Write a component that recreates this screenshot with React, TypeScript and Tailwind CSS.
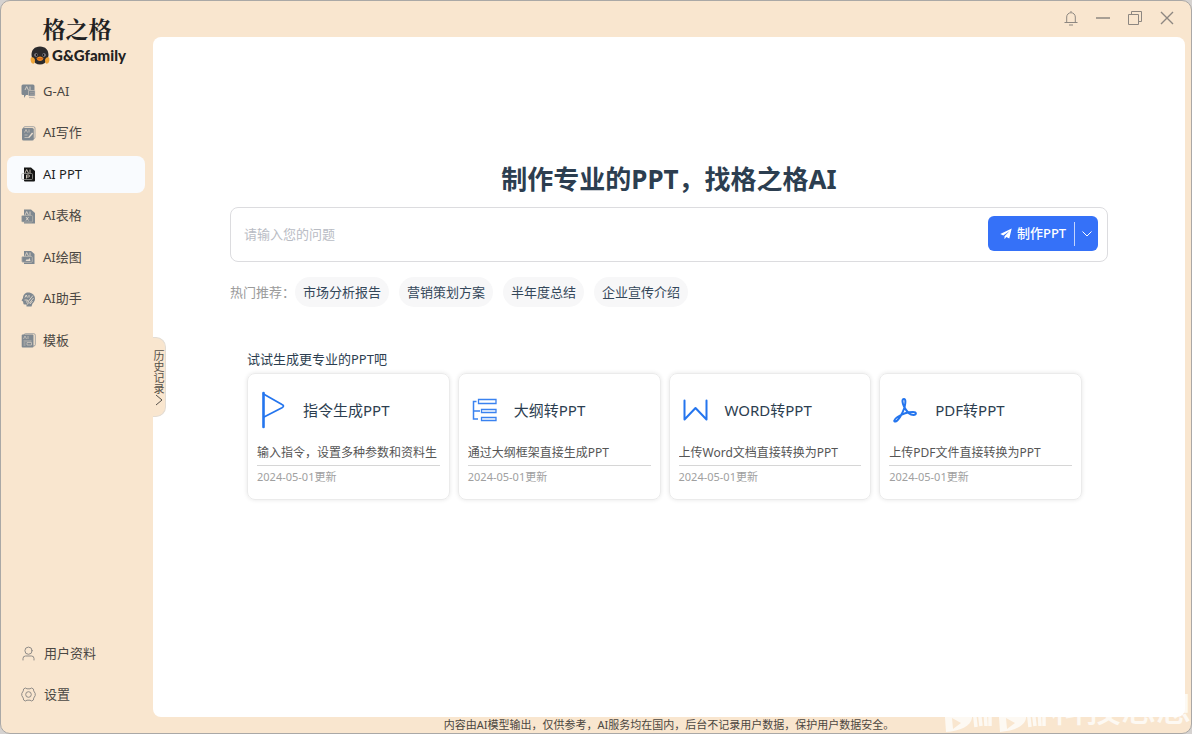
import React, { useState } from "react";

const Penguin = () => (
  <svg viewBox="0 0 40 38" className="w-5 h-[19px]" aria-hidden="true">
    <path
      d="M20 1C9 1 3 8 3 18c0 4 2 6 3 9 2 7 7 10 14 10s12-3 14-10c1-3 3-5 3-9C37 8 31 1 20 1z"
      fill="#2b2a2c"
    />
    <path d="M2 23c4-2 8 1 8 6s-2 7-5 6-5-8-3-12z" fill="#f0a63a" />
    <path d="M38 23c-4-2-8 1-8 6s2 7 5 6 5-8 3-12z" fill="#f0a63a" />
    <circle cx="12" cy="18" r="3.6" fill="#8c8b93" />
    <circle cx="28" cy="18" r="3.6" fill="#8c8b93" />
    <circle cx="13" cy="18" r="1.8" fill="#111" />
    <circle cx="27" cy="18" r="1.8" fill="#111" />
    <path d="M13 24c3-1 4-3 7-3s4 2 7 3c-1 4-3 6-7 6s-6-2-7-6z" fill="#f08a24" />
    <path d="M15 25c3 1 7 1 10 0" stroke="#a33c15" strokeWidth="1.2" fill="none" />
  </svg>
);

const AiMark = () => (
  <path
    d="M4 6 5.7 2.5 7.4 6M9 2.5V6"
    stroke="#e9ddcf"
    strokeWidth="0.8"
    fill="none"
  />
);

const icons: Record<string, React.ReactNode> = {
  chat: (
    <>
      <path d="M2 .5h10A1.5 1.5 0 0 1 13.500 2v9H5l-2 3v-3H2A1.500 1.500 0 0 1 .500 9.500V2A1.500 1.500 0 0 1 2 .500z" fill="currentColor" />
      <AiMark />
      <path d="M7.5 6.500H14V12H7.500z" fill="currentColor" stroke="#d9cfc3" strokeWidth="0.6" />
      <path d="M9 8.300h4M9 10.200h4M8 13.600h5l1.200 1" stroke="#a8a5a2" strokeWidth="0.8" fill="none" />
    </>
  ),
  write: (
    <>
      <rect x="2.5" y="0.7" width="11.5" height="12" rx="1.5" fill="none" stroke="currentColor" strokeWidth="0.7" />
      <rect x="1" y="2" width="11.8" height="12.5" rx="1.5" fill="currentColor" />
      <path d="m3.500 6.500 1.500-3 1.500 3M8 3.500v3M3.500 9h3M3.500 11.500h4" stroke="#d9cfc3" strokeWidth="0.7" fill="none" />
      <path d="m7 11.500 4-5 1.200 1-4 4.500z" fill="#e9ddcf" />
    </>
  ),
  ppt: (
    <>
      <path d="M3 .5h7L14 4v9.500a1 1 0 0 1-1 1H4a1 1 0 0 1-1-1z" fill="currentColor" />
      <AiMark />
      <rect x="0.7" y="6.5" width="10.8" height="6" rx="1" fill="none" stroke="#a9a9a5" strokeWidth="0.7" />
      <path d="M5.500 11.500V8h2a1 1 0 0 1 0 2h-2" stroke="#e9ddcf" strokeWidth="0.8" fill="none" />
    </>
  ),
  sheet: (
    <>
      <path d="M3 .5h7L14 4v10.500H3z" fill="currentColor" />
      <AiMark />
      <rect x="0.6" y="6.5" width="11" height="6.5" rx="1" fill="currentColor" stroke="#c5bfb6" strokeWidth="0.6" />
      <path d="m5 8 2.500 3.500M7.500 8 5 11.500" stroke="#e9ddcf" strokeWidth="0.8" />
    </>
  ),
  paint: (
    <>
      <path d="M3 1h7l3.500 3v10H3z" fill="currentColor" />
      <AiMark />
      <rect x="0.8" y="6.5" width="10.5" height="5.8" rx="1" fill="currentColor" stroke="#c9c1b7" strokeWidth="0.7" />
      <path d="m4.500 11 1.500-2 1 1 1.500-2 1 3z" fill="#e9ddcf" />
    </>
  ),
  helper: (
    <>
      <path d="M7 .5c4 0 7 2.500 7 6 0 2.500-1.500 4-2.500 5l-1 3h-5v-2h-2c-1.500 0-1-2-1.500-3L.5 8.500 2 6C2 3 4 .5 7 .5z" fill="currentColor" />
      <path d="m4 5.500 1.200-2.500 1.200 2.500M8 3v2.500M3.500 8h3l-1 2.500M12 3.500 7.500 9M12.500 6 8 11.500M7.500 9l-1 3.500M11.500 9 9 12" stroke="#f1e3d2" strokeWidth="0.8" fill="none" />
    </>
  ),
  template: (
    <>
      <rect x="3" y="0.7" width="11.3" height="12.3" rx="1.5" fill="none" stroke="currentColor" strokeWidth="0.7" />
      <rect x="0.7" y="1.5" width="11.8" height="13" rx="1" fill="currentColor" />
      <path d="m2.500 6 1.500-3 1.500 3M7 3v3M2.500 8h8M2.500 10h2M2.500 12h2M6 9.500h4.500V12H6z" stroke="#d9cfc3" strokeWidth="0.7" fill="none" />
    </>
  ),
};

const navItems = [
  { id: "chat", label: "G-AI" },
  { id: "write", label: "AI写作" },
  { id: "ppt", label: "AI PPT" },
  { id: "sheet", label: "AI表格" },
  { id: "paint", label: "AI绘图" },
  { id: "helper", label: "AI助手" },
  { id: "template", label: "模板" },
];

const hotTopics = ["市场分析报告", "营销策划方案", "半年度总结", "企业宣传介绍"];

const cards = [
  {
    title: "指令生成PPT",
    desc: "输入指令，设置多种参数和资料生",
    icon: (
      <svg viewBox="0 0 26 38" className="w-[26px] h-[38px] ml-1" fill="none" stroke="#2475ee" strokeLinecap="round" strokeLinejoin="round">
        <path d="M2.5 2v34" strokeWidth="2.6" />
        <path d="M2.5 3 21 13.500q3 1.500 0 3.200L3 26" strokeWidth="1.7" />
      </svg>
    ),
  },
  {
    title: "大纲转PPT",
    desc: "通过大纲框架直接生成PPT",
    icon: (
      <svg viewBox="0 0 26 24" className="w-[26px] h-6 ml-1" fill="none" stroke="#3a82f0" strokeWidth="1.3">
        <path d="M4.500 3.500H1.500V21H6M1.500 13H8" strokeWidth="1.5" />
        <path d="M6.500 1.500H24v4H6.500zM9.500 11.500H24v3H9.500zM9.500 19.500H24v3H9.500z" />
      </svg>
    ),
  },
  {
    title: "WORD转PPT",
    desc: "上传Word文档直接转换为PPT",
    icon: (
      <svg viewBox="0 0 26 24" className="w-[26px] h-6 ml-1" fill="none" stroke="#2475ee" strokeWidth="2" strokeLinecap="round" strokeLinejoin="round">
        <path d="M1.500 2.500v19l11-11.500 11 11.500v-19" />
      </svg>
    ),
  },
  {
    title: "PDF转PPT",
    desc: "上传PDF文件直接转换为PPT",
    icon: (
      <svg viewBox="0 0 26 26" className="w-[26px] h-[26px] ml-1" fill="none" stroke="#2475ee" strokeWidth="2" strokeLinecap="round" strokeLinejoin="round">
        <path d="M11 2c-2.500 0-1.500 4.500 0 7.500 2.500 5 6 8.500 9.500 8.500 3.500 0 3-3-.5-3-5 0-11 2-15.500 5-4.500 3-3.500 5-2 4.500 3-1 7-8 9-14 1-4 1.500-8.500-.5-8.500z" />
      </svg>
    ),
  },
];

const windowButtons = [
  {
    label: "通知",
    icon: <path d="M8 1v1M1.500 12.500h13M3.700 12V7a4.300 4.300 0 0 1 8.600 0v5M6 15h4" />,
  },
  { label: "最小化", icon: <path d="M1 8h14" strokeWidth="1.4" /> },
  {
    label: "还原",
    icon: <path d="M1.500 4.500h10v10h-10zM4.500 4.500v-3h10v10h-3" />,
  },
  { label: "关闭", icon: <path d="m2 2 12 12M14 2 2 14" strokeWidth="1.4" /> },
];

const Watermark = () => (
  <div
    aria-hidden="true"
    className="absolute right-0 bottom-0 flex h-12 items-center text-[#fdf9f3] pointer-events-none"
  >
    <svg viewBox="0 0 108 48" className="h-12 w-[108px]">
      {[0, 54].map((x) => (
        <g key={x} transform={`translate(${x} 0)`}>
          <path d="m0 4 7-1 2 20c14 0 21 3 20 10-1 8-12 13-26 14z" fill="currentColor" />
          <path d="m9 33 9 5-8 6z" fill="#f9e6cf" />
          <path d="m31 24 2 18M36 24l2 17M42 24l1 17M47 24v17" stroke="currentColor" strokeWidth="3.5" />
        </g>
      ))}
    </svg>
    <span className="text-[35px] leading-[48px] font-medium">科技思想</span>
  </div>
);

const App: React.FC = () => {
  const [active, setActive] = useState("ppt");
  const [question, setQuestion] = useState("");

  return (
    <div className="h-screen bg-[#d5d2d0] font-['Noto_Sans','Noto_Sans_CJK_SC',sans-serif]">
      <div className="relative flex h-full overflow-hidden rounded-[10px] border border-[#aaa8a6] bg-[#f9e6cf]">
        <Watermark />

        <aside className="flex w-[152px] shrink-0 flex-col pt-3.5 pb-5">
          <div className="text-center font-['Noto_Serif_CJK_SC','Noto_Sans_CJK_SC',serif] text-[23px] leading-7 font-bold text-[#222]">
            格之格
          </div>
          <div className="mt-0.5 flex h-5 items-center justify-center gap-0.5 pl-0.5 font-['Lato','Noto_Sans',sans-serif] text-[15px] font-black text-[#222]">
            <Penguin />
            <span>G&amp;Gfamily</span>
          </div>

          <nav className="mt-2 flex h-[286px] flex-col justify-between pr-2 pl-1.5">
            {navItems.map((item) => (
              <button
                key={item.id}
                onClick={() => setActive(item.id)}
                className={`flex h-[37px] items-center gap-[7px] rounded-lg pl-3.5 text-[13px] ${
                  active === item.id ? "bg-[#f9fbfe] text-[#1f1f1f]" : "text-[#4a4743]"
                }`}
              >
                <svg
                  viewBox="0 0 15 15"
                  aria-hidden="true"
                  className={`size-[15px] ${active === item.id ? "text-[#151515]" : "text-[#7f8890]"}`}
                >
                  {icons[item.id]}
                </svg>
                <span>{item.label}</span>
              </button>
            ))}
          </nav>

          <div className="mt-auto flex flex-col gap-1 pr-2 pl-1.5 text-[13px] text-[#4a4743]">
            <button className="flex h-[37px] items-center gap-2 pl-3.5">
              <svg viewBox="0 0 15 15" className="size-[15px]" fill="none" stroke="#8f8b87" strokeLinecap="round" aria-hidden="true">
                <circle cx="7.5" cy="4.7" r="3.6" />
                <path d="M2 14v-1.500A2.500 2.500 0 0 1 4.500 10h6a2.500 2.500 0 0 1 2.500 2.500V14" />
              </svg>
              <span>用户资料</span>
            </button>
            <button className="flex h-[37px] items-center gap-2 pl-3.5">
              <svg viewBox="0 0 15 15" className="size-[15px]" fill="none" stroke="#8f8b87" strokeLinejoin="round" aria-hidden="true">
                <path d="M4.300 1 6 1.800h3L10.700 1l1.700 1 .3 1.900 1.500 2.500v2.200l-1.500 2.500-.3 1.900-1.700 1-1.700-.8H6l-1.700.8-1.700-1-.3-1.900L.8 8.600V6.400l1.500-2.500.3-1.900z" />
                <circle cx="7.5" cy="7.5" r="2.8" />
              </svg>
              <span>设置</span>
            </button>
          </div>
        </aside>

        <div className="flex min-w-0 flex-1 flex-col pr-1.5">
          <header className="flex h-9 shrink-0 items-start justify-end pt-px pr-0.5">
            {windowButtons.map((b) => (
              <button key={b.label} aria-label={b.label} className="flex h-8 w-8 items-center justify-center">
                <svg viewBox="0 0 16 16" className="size-4" fill="none" stroke="#8d8781">
                  {b.icon}
                </svg>
              </button>
            ))}
          </header>

          <main className="relative min-h-0 flex-1 rounded-lg bg-white px-[77px] pt-[124px]">
            <button className="absolute top-[300px] left-0 flex h-20 w-[13px] flex-col items-center justify-center rounded-r-[10px] border border-l-0 border-[#e3dcd3] bg-[#f9e6cf] pt-0.5 text-[11px] leading-[11px] text-[#55504a]">
              <span className="w-[11px]">历史记录</span>
              <svg viewBox="0 0 8 12" className="h-3 w-2" fill="none" stroke="#55504a" aria-hidden="true">
                <path d="m1 1 6 5-6 5" />
              </svg>
            </button>

            <h1 className="text-center text-[26px] leading-9 font-bold text-[#2c3e50]">
              制作专业的PPT，找格之格AI
            </h1>

            <div className="mt-2.5 flex h-[55px] items-start rounded-lg border border-[#dcdcdf] pt-2 pr-[9px] pl-[13px]">
              <input
                aria-label="请输入您的问题"
                value={question}
                onChange={(e) => setQuestion(e.target.value)}
                placeholder="请输入您的问题"
                className="h-9 min-w-0 flex-1 text-[13px] text-[#2c3e50] outline-none placeholder:text-[#b9bcc4]"
              />
              <div className="flex h-[35px] w-[110px] items-center rounded-md bg-[#3571f8] text-white">
                <button className="flex flex-1 items-center gap-[5px] pl-3 text-[13px] font-medium">
                  <svg viewBox="0 0 12 12" className="size-3" fill="currentColor" aria-hidden="true">
                    <path d="M11.700.5.300 6l3 1.500L9.500 3 4.500 8.300v3L6.300 9l3 1.500z" />
                  </svg>
                  <span>制作PPT</span>
                </button>
                <button aria-label="更多选项" className="flex h-6 w-6 items-center justify-center border-l border-[#c3d4fd]">
                  <svg viewBox="0 0 10 6" className="h-1.5 w-2.5" fill="none" stroke="currentColor">
                    <path d="m.5.5 4.500 4.500L9.500.5" />
                  </svg>
                </button>
              </div>
            </div>

            <div className="mt-[15px] flex items-center text-[13px]">
              <span className="pt-px text-[#9b9b9b]">热门推荐：</span>
              <div className="flex gap-2.5">
                {hotTopics.map((topic) => (
                  <button
                    key={topic}
                    onClick={() => setQuestion(topic)}
                    className="h-[30px] rounded-full bg-[#f7f7f8] px-2 pt-px text-[#34475a]"
                  >
                    {topic}
                  </button>
                ))}
              </div>
            </div>

            <section className="mt-[42px] pr-[26px] pl-[17px]">
              <h2 className="text-[13px] leading-5 text-[#2c3e50]">试试生成更专业的PPT吧</h2>
              <div className="mt-1 grid grid-cols-4 gap-2">
                {cards.map((card) => (
                  <article
                    key={card.title}
                    className="rounded-lg border border-[#ebebeb] px-[9px] pt-[17px] pb-3 shadow-[0_0_4px_rgba(0,0,0,0.1)]"
                  >
                    <div className="flex h-[38px] items-center">
                      <div className="w-[46px]">{card.icon}</div>
                      <h3 className="text-[15px] text-[#2c3e50]">{card.title}</h3>
                    </div>
                    <p className="mt-3.5 overflow-hidden border-b border-[#d6d6d6] pb-0.5 text-xs leading-5 whitespace-nowrap text-[#555]">
                      {card.desc}
                    </p>
                    <p className="mt-px text-[11px] leading-5 text-[#a0a0a0]">2024-05-01更新</p>
                  </article>
                ))}
              </div>
            </section>
          </main>

          <footer className="flex h-4 shrink-0 items-center justify-center text-[11px] text-[#4c4741]">
            内容由AI模型输出，仅供参考，AI服务均在国内，后台不记录用户数据，保护用户数据安全。
          </footer>
        </div>
      </div>
    </div>
  );
};

export default App;
